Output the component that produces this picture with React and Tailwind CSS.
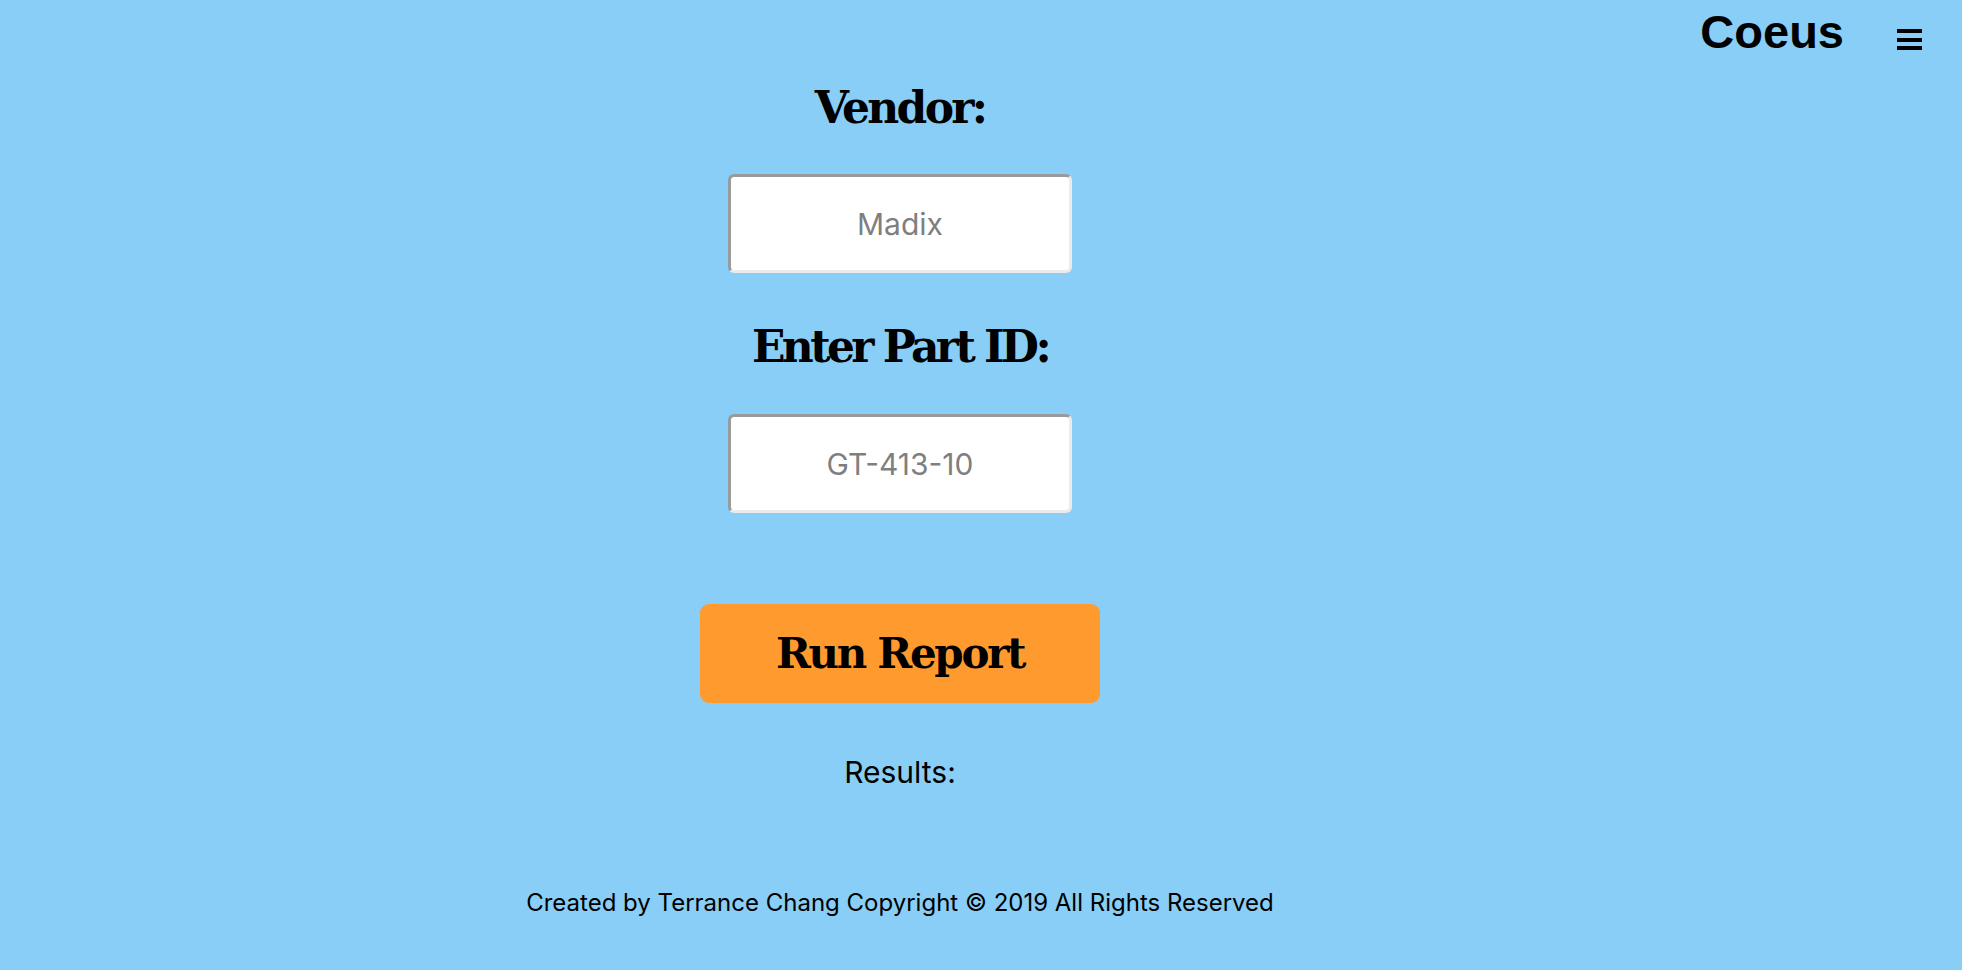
import React from 'react';

const slab = "font-['DejaVu_Serif',serif] font-bold";

const Field = ({ placeholder }) => (
    <input
        type="text"
        placeholder={placeholder}
        className="w-[344px] h-[99px] bg-white rounded-[6px] border-[3px] border-t-[#9a9a9a] border-l-[#9a9a9a] border-b-[#ebebeb] border-r-[#ebebeb] text-center text-[30px] font-['Inter',sans-serif] placeholder:text-[#7f7f7f] outline-none"
    />
);

export default function App() {
    return (
        <div className="min-h-[970px] w-full bg-[#89cef7] font-['Inter',sans-serif] text-black">
            {/* Header */}
            <header className="h-[70px] flex items-start justify-end pr-[40px]">
                <h1 className="mt-[6px] text-[47px] font-bold font-['Liberation_Sans',sans-serif] leading-[52px]">Coeus</h1>
                <button className="ml-[53px] mt-[29px] w-[25px] h-[21px] flex flex-col justify-between">
                    <span className="block h-[4px] w-full bg-black" />
                    <span className="block h-[4px] w-full bg-black" />
                    <span className="block h-[4px] w-full bg-black" />
                </button>
            </header>

            <main className="w-[1800px] flex flex-col items-center">
                <h2 className={`${slab} mt-[8px] text-[44px] tracking-[-2.7px] leading-[60px]`}>Vendor:</h2>
                <div className="mt-[36px]">
                    <Field placeholder="Madix" />
                </div>
                <h2 className={`${slab} mt-[44px] text-[44px] tracking-[-3.6px] leading-[60px]`}>Enter Part ID:</h2>
                <div className="mt-[37px]">
                    <Field placeholder="GT-413-10" />
                </div>
                <button className={`${slab} mt-[91px] w-[400px] h-[99px] rounded-[9px] bg-[#ff9a2f] text-[42px] tracking-[-2.3px]`}>
                    Run Report
                </button>
                <p className="mt-[51px] text-[30px] leading-[36px]">Results:</p>
                <footer className="mt-[98px] text-[24px] leading-[30px]">
                    Created by Terrance Chang Copyright © 2019 All Rights Reserved
                </footer>
            </main>
        </div>
    );
}
